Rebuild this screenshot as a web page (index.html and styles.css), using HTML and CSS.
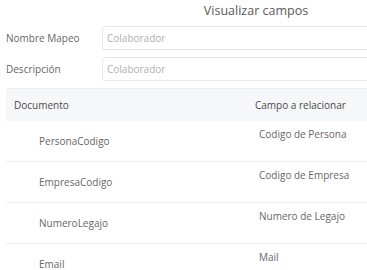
FILE: index.html
```html
<!DOCTYPE html>
<html lang="es">
<head>
  <meta charset="UTF-8" />
  <title>Visualizar campos</title>
  <link rel="stylesheet" href="styles.css">
</head>
<body>

<div class="panel">
  <h2 class="title">Visualizar campos</h2>

  <div class="field">
    <label>Nombre Mapeo</label>
    <input type="text" placeholder="Colaborador" />
  </div>
  <div class="field">
    <label>Descripción</label>
    <input type="text" placeholder="Colaborador" />
  </div>

  <table class="grid">
    <thead>
      <tr>
        <th class="col-doc">Documento</th>
        <th class="col-rel">Campo a relacionar</th>
      </tr>
    </thead>
    <tbody>
      <tr><td class="doc">PersonaCodigo</td><td class="rel">Codigo de Persona</td></tr>
      <tr><td class="doc">EmpresaCodigo</td><td class="rel">Codigo de Empresa</td></tr>
      <tr><td class="doc">NumeroLegajo</td><td class="rel">Numero de Legajo</td></tr>
      <tr><td class="doc">Email</td><td class="rel">Mail</td></tr>
    </tbody>
  </table>
</div>

</body>
</html>
```

FILE: styles.css
```css
* {
  box-sizing: border-box;
}

html, body {
  margin: 0;
  padding: 0;
  overflow: hidden;
  background: #ffffff;
  font-family: "Open Sans", "DejaVu Sans", sans-serif;
  color: #666666;
}

.panel {
  width: 500px;
  margin-left: 6px;
}

.title {
  margin: 0;
  padding-top: 2px;
  height: 26px;
  text-align: center;
  font-size: 12.5px;
  font-weight: normal;
  color: #5a5a5a;
}

.field {
  display: flex;
  align-items: center;
  margin-bottom: 7px;
}

.field label {
  width: 96px;
  font-size: 10px;
  color: #666666;
}

.field input {
  flex: 1;
  height: 24px;
  padding: 0 4px;
  border: 1px solid #e8e8e8;
  border-radius: 3px;
  font-family: inherit;
  font-size: 10px;
  color: #666666;
}

.field input::placeholder {
  color: #b0b0b0;
}

.grid {
  width: 100%;
  border-collapse: collapse;
  border-top: 1px solid #ededed;
}

.grid th {
  height: 32px;
  background: #f6f7f9;
  font-size: 10px;
  font-weight: normal;
  text-align: left;
  color: #4a4a4a;
}

.grid .col-doc {
  width: 241px;
  padding-left: 8px;
}

.grid .col-rel {
  padding-left: 8px;
}

.grid td {
  height: 41px;
  font-size: 10px;
  border-bottom: 1px solid #ededed;
}

.grid .doc {
  padding-left: 33px;
  vertical-align: middle;
  color: #666666;
}

.grid .rel {
  padding-left: 12px;
  padding-top: 6px;
  vertical-align: top;
  color: #666666;
}
```
